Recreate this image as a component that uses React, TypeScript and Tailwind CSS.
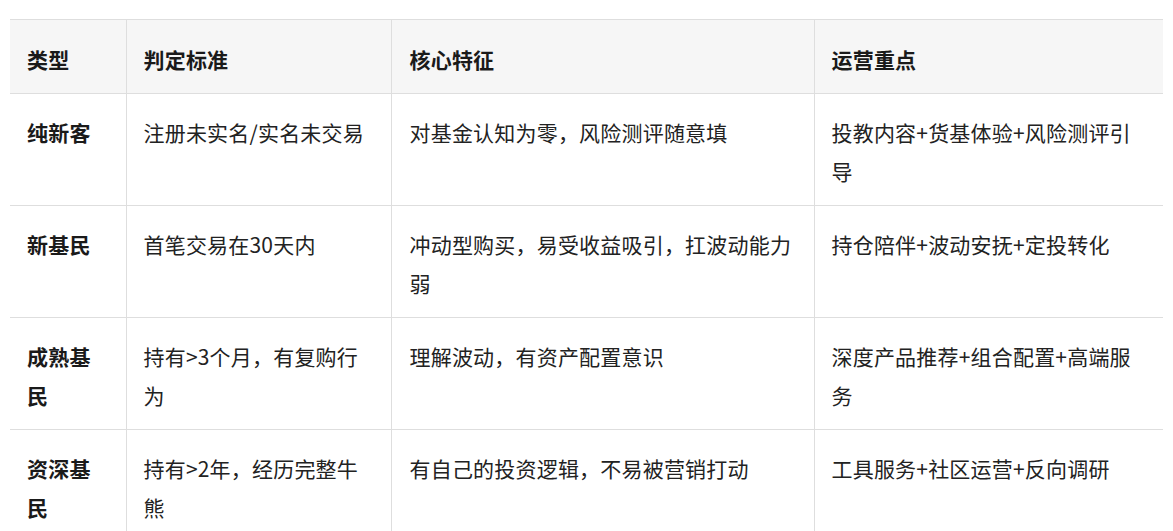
import React from "react";

const rows: { type: string; rule: string; feature: string; focus: string }[] = [
  {
    type: "纯新客",
    rule: "注册未实名/实名未交易",
    feature: "对基金认知为零，风险测评随意填",
    focus: "投教内容+货基体验+风险测评引导",
  },
  {
    type: "新基民",
    rule: "首笔交易在30天内",
    feature: "冲动型购买，易受收益吸引，扛波动能力弱",
    focus: "持仓陪伴+波动安抚+定投转化",
  },
  {
    type: "成熟基民",
    rule: "持有>3个月，有复购行为",
    feature: "理解波动，有资产配置意识",
    focus: "深度产品推荐+组合配置+高端服务",
  },
  {
    type: "资深基民",
    rule: "持有>2年，经历完整牛熊",
    feature: "有自己的投资逻辑，不易被营销打动",
    focus: "工具服务+社区运营+反向调研",
  },
];

export default function App() {
  return (
    <div
      className="min-h-[531px] bg-white pt-[19px] pl-[10px]"
      style={{ fontFamily: '"Noto Sans CJK SC", "Noto Sans", sans-serif' }}
    >
      <table className="w-[1153px] table-fixed border-collapse text-[21px] leading-[39px] tracking-[0.2px]">
        <colgroup>
          <col className="w-[116px]" />
          <col className="w-[265px]" />
          <col className="w-[423px]" />
          <col className="w-[349px]" />
        </colgroup>
        <thead>
          <tr className="bg-[#f6f6f6] border-t border-b border-[#dedede]">
            <th className="pl-[17px] pr-[16px] pt-[20px] pb-[14px] text-left align-top font-bold text-[#1a1a1a]">类型</th>
            <th className="pl-[17px] pr-[16px] pt-[20px] pb-[14px] text-left align-top font-bold text-[#1a1a1a] border-l border-[#dedede]">判定标准</th>
            <th className="pl-[18px] pr-[16px] pt-[20px] pb-[14px] text-left align-top font-bold text-[#1a1a1a] border-l border-[#dedede]">核心特征</th>
            <th className="pl-[17px] pr-[16px] pt-[20px] pb-[14px] text-left align-top font-bold text-[#1a1a1a] border-l border-[#dedede]">运营重点</th>
          </tr>
        </thead>
        <tbody>
          {rows.map((r) => (
            <tr key={r.type} className="border-b border-[#dedede]">
              <td className="pl-[17px] pr-[16px] pt-[19px] pb-[14px] align-top font-bold text-[#1a1a1a]">{r.type}</td>
              <td className="pl-[17px] pr-[16px] pt-[19px] pb-[14px] align-top text-[#222222] border-l border-[#dedede]">{r.rule}</td>
              <td className="pl-[18px] pr-[16px] pt-[19px] pb-[14px] align-top text-[#222222] border-l border-[#dedede]">{r.feature}</td>
              <td className="pl-[17px] pr-[16px] pt-[19px] pb-[14px] align-top text-[#222222] border-l border-[#dedede]">{r.focus}</td>
            </tr>
          ))}
        </tbody>
      </table>
    </div>
  );
}
